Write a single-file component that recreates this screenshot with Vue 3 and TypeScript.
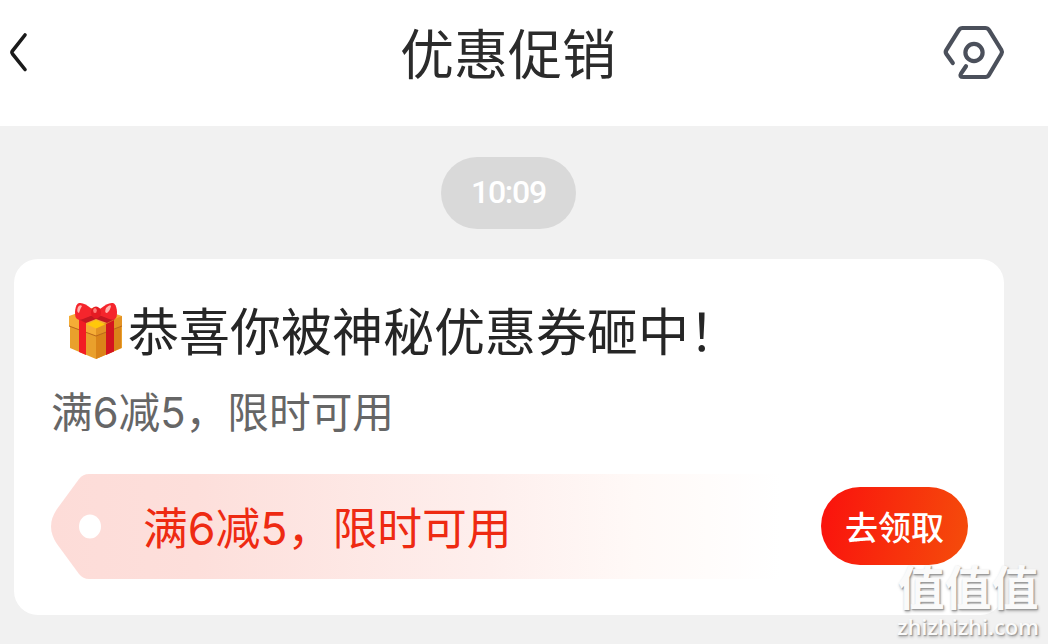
<template>
  <div class="page">
    <header class="nav">
      <button class="icon-btn back" aria-label="返回">
        <svg width="22" height="42" viewBox="0 0 22 42" fill="none">
          <path d="M17 4 L4.5 19.8 Q3.4 21.3 4.5 22.8 L17 38.5" />
        </svg>
      </button>
      <h1 class="nav-title">{{ title }}</h1>
      <button class="icon-btn settings" aria-label="设置">
        <svg width="64" height="60" viewBox="0 0 64 60" fill="none">
          <path d="M10.8 38 L4.4 29 Q3.1 27.2 4.3 25.2 L16.8 5.2 Q18.1 3 20.6 3 H43.2 Q45.7 3 47.1 5.2 L59.4 25 Q60.6 27 59.4 29 L47.1 49.8 Q45.8 52 43.4 52 H21.4 Q17 52 19.2 48.3 L24 41.2" />
          <circle cx="32" cy="27.5" r="8.6" />
        </svg>
      </button>
    </header>

    <main class="messages">
      <time class="time">{{ time }}</time>

      <section class="card">
        <h2 class="card-title">
          <svg class="gift" width="54" height="58" viewBox="0 0 54 58">
            <path fill="#e9a02c" d="M1 17 L27 8 L53 17 V46 L27 57 L1 46 Z" />
            <path fill="#da8419" d="M27 31 L52 22 V46 L27 57 Z" />
            <path fill="#f5ad36" d="M0 14 L26 5 L53 14 V24 L27 34 L0 24 Z" />
            <path fill="#e39324" d="M27 25 L53 14 V24 L27 34 Z" />
            <path fill="#b9661a" d="M0 23.4 L27 33.4 L53 23.4 V24.6 L27 34.6 L0 24.6 Z" />
            <path fill="#f21d24" d="M10 17 L17 20 V53 L10 50 Z" />
            <path fill="#d4141f" d="M37 22 L45 18 V49.5 L37 53 Z" />
            <path fill="#c41722" d="M9 17 L27 12 L46 17 L38 21 L27 17 L17 21 Z" />
            <path fill="#ffc80a" d="M18 22.5 L27 18 L36 22.5 L27 26.5 Z" />
            <path fill="#f5252c" d="M23 7 Q15 0 10 1 C6 2 5 12 7 16 Q9 19 14 17 L24 13 Z" />
            <path fill="#f5252c" d="M31 7 Q39 0 44 1 C48 2 49 12 47 16 Q45 19 40 17 L30 13 Z" />
            <path fill="#ffb3ae" d="M9 5 Q11 2 13 4 Q11 7 10 11 Q7 10 9 5 Z M37 6 Q41 2 42 4 Q41 9 38 11 Q35 11 37 6 Z" />
            <ellipse cx="27" cy="10.5" rx="5" ry="6" fill="#e51b23" />
            <ellipse cx="26" cy="8.5" rx="1.8" ry="2.6" fill="#ff7b78" />
          </svg>
          <span class="card-heading">{{ heading }}</span>
        </h2>
        <p class="card-desc">{{ offer }}</p>

        <div class="coupon">
          <svg class="coupon-bg" width="730" height="105" viewBox="0 0 730 105">
            <defs>
              <linearGradient id="coupon-fade" x1="0" x2="1" y1="0" y2="0">
                <stop offset="0" stop-color="#fddcd8" />
                <stop offset="0.2" stop-color="#fddfdb" />
                <stop offset="0.6" stop-color="#feefed" />
                <stop offset="0.8" stop-color="#fff9f7" />
                <stop offset="1" stop-color="#ffffff" />
              </linearGradient>
            </defs>
            <path fill="url(#coupon-fade)" d="M38 0 H730 V105 H38 Q32 105 28 100 L6 70 Q-6 52.5 6 35 L28 5 Q32 0 38 0 Z" />
            <ellipse cx="39" cy="52.5" rx="11" ry="12" fill="#fff" />
          </svg>
          <span class="coupon-text">{{ offer }}</span>
          <button class="claim">去领取</button>
        </div>
      </section>
    </main>

    <div class="watermark">
      <span class="mark-name">值值值</span>
      <span class="mark-site">zhizhizhi.com</span>
    </div>
  </div>
</template>

<script setup lang="ts">
import { ref } from 'vue'

const title = ref<string>('优惠促销')
const time = ref<string>('10:09')
const heading = ref<string>('恭喜你被神秘优惠券砸中！')
const offer = ref<string>('满6减5，限时可用')
</script>

<style>
body {
  margin: 0;
  background: #f1f1f1;
}
</style>

<style scoped>
.page {
  position: relative;
  display: flex;
  flex-direction: column;
  width: 1048px;
  height: 644px;
  overflow: hidden;
  background: #f1f1f1;
  font-family: Inter, "Noto Sans CJK SC", sans-serif;
}

button {
  border: 0;
  padding: 0;
  font-family: inherit;
}

.nav {
  display: flex;
  align-items: flex-start;
  justify-content: space-between;
  box-sizing: border-box;
  height: 126px;
  padding: 15px 42px 0 8px;
  background: #fff;
}

.icon-btn {
  display: flex;
  background: none;
}

.back {
  width: 66px;
  padding-top: 16px;
}

.back path {
  stroke: #1a1a1a;
  stroke-width: 3.6;
  stroke-linecap: round;
}

.settings {
  padding-top: 10px;
}

.settings path,
.settings circle {
  stroke: #4b505b;
  stroke-width: 4.2;
  stroke-linecap: round;
}

.nav-title {
  margin: 0;
  font-size: 54px;
  line-height: 82px;
  font-weight: 400;
  color: #2b2b2b;
}

.messages {
  display: flex;
  flex-direction: column;
  align-items: flex-start;
  padding: 31px 44px 0 14px;
}

.time {
  width: 135px;
  margin-left: 427px;
  border-radius: 36px;
  background: #d9d9d9;
  color: #fff;
  font-family: Roboto, sans-serif;
  font-size: 32px;
  line-height: 70px;
  height: 72px;
  font-weight: 500;
  letter-spacing: -1.2px;
  text-align: center;
}

.card {
  box-sizing: border-box;
  width: 990px;
  height: 356px;
  margin-top: 30px;
  padding: 34px 36px 0 37px;
  border-radius: 24px;
  background: #fff;
}

.card-title {
  display: flex;
  align-items: center;
  gap: 5px;
  margin: 0;
  padding-left: 18px;
  font-size: 51px;
  line-height: 76px;
  font-weight: 400;
  color: #262626;
  white-space: nowrap;
}

.card-heading {
  height: 76px;
  line-height: 80px;
}

.card-desc {
  margin: 13px 0 0;
  font-size: 41.7px;
  line-height: 62px;
  color: #666;
}

.coupon {
  position: relative;
  display: flex;
  align-items: flex-start;
  justify-content: space-between;
  height: 105px;
  margin-top: 30px;
  padding-left: 92px;
}

.coupon-bg {
  position: absolute;
  top: 0;
  left: 0;
}

.coupon-text {
  position: relative;
  font-size: 44.8px;
  line-height: 111px;
  color: #ee2a12;
}

.claim {
  width: 147px;
  height: 78px;
  margin-top: 13px;
  border-radius: 39px;
  background: linear-gradient(100deg, #fa140d 5%, #f54a0b 95%);
  color: #fff;
  font-size: 33px;
  font-weight: 500;
}

.watermark {
  position: absolute;
  right: 9px;
  bottom: 6px;
  display: flex;
  flex-direction: column;
  align-items: center;
  color: #fafafa;
  white-space: nowrap;
  text-shadow: 1px 1px 1px #999, 1px 2px 3px #aaa;
}

.mark-name {
  font-size: 47px;
  line-height: 52px;
  font-weight: 700;
}

.mark-site {
  font-family: "Open Sans", sans-serif;
  font-size: 22px;
  line-height: 24px;
  font-weight: 600;
  letter-spacing: -0.1px;
}
</style>
